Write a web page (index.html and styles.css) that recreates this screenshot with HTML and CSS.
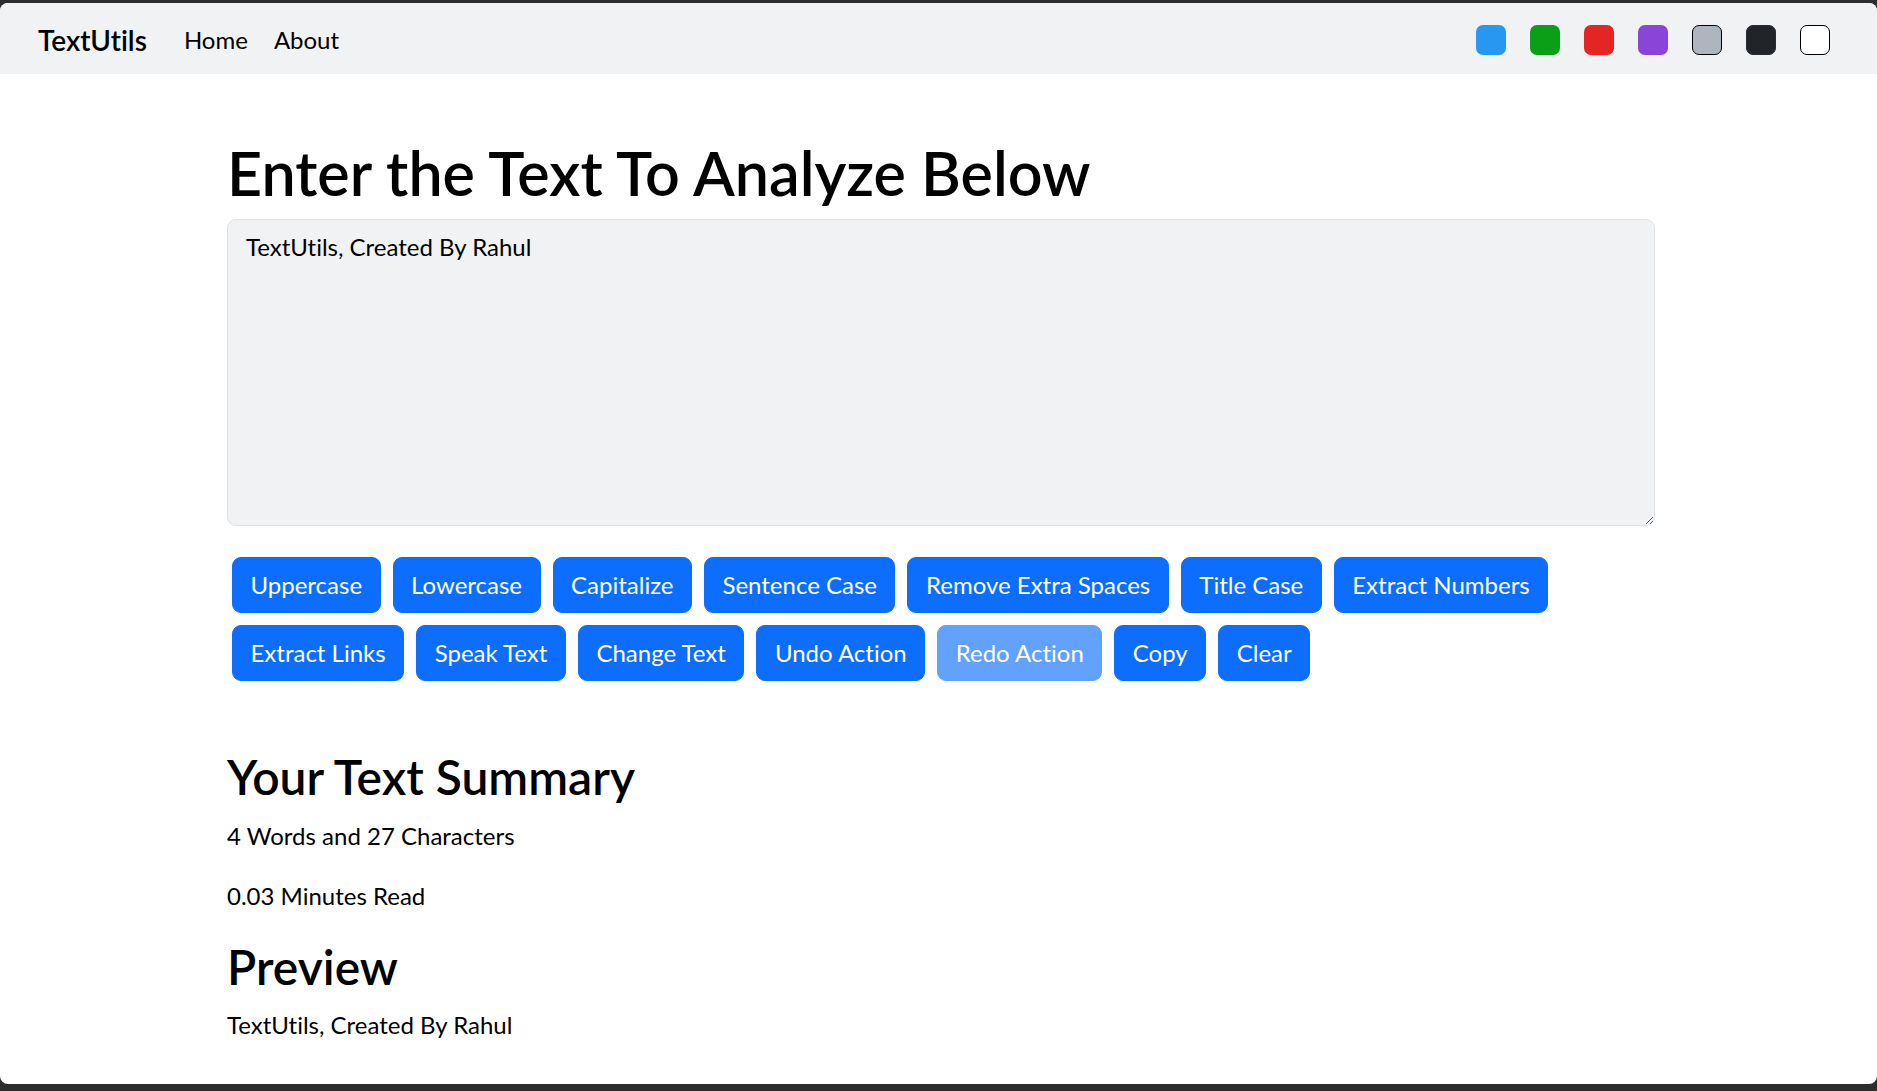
FILE: index.html
```html
<!DOCTYPE html>
<html lang="en">
<head>
<meta charset="utf-8">
<title>TextUtils - Home</title>
<link rel="stylesheet" href="styles.css">
</head>
<body>
<div class="window">
  <nav class="navbar">
    <a class="brand" href="#">TextUtils</a>
    <ul class="nav-links">
      <li><a href="#">Home</a></li>
      <li><a href="#">About</a></li>
    </ul>
    <div class="swatches">
      <span class="swatch swatch-blue"></span>
      <span class="swatch swatch-green"></span>
      <span class="swatch swatch-red"></span>
      <span class="swatch swatch-purple"></span>
      <span class="swatch swatch-gray"></span>
      <span class="swatch swatch-dark"></span>
      <span class="swatch swatch-white"></span>
    </div>
  </nav>
  <main class="container">
    <h1 class="title">Enter the Text To Analyze Below</h1>
    <textarea class="text-input">TextUtils, Created By Rahul</textarea>
    <div class="actions">
      <button class="btn">Uppercase</button>
      <button class="btn">Lowercase</button>
      <button class="btn">Capitalize</button>
      <button class="btn">Sentence Case</button>
      <button class="btn">Remove Extra Spaces</button>
      <button class="btn">Title Case</button>
      <button class="btn">Extract Numbers</button>
      <button class="btn">Extract Links</button>
      <button class="btn">Speak Text</button>
      <button class="btn">Change Text</button>
      <button class="btn">Undo Action</button>
      <button class="btn btn-disabled" disabled>Redo Action</button>
      <button class="btn">Copy</button>
      <button class="btn">Clear</button>
    </div>
    <section class="summary">
      <h2 class="section-title">Your Text Summary</h2>
      <p class="stat">4 Words and 27 Characters</p>
      <p class="stat">0.03 Minutes Read</p>
      <h2 class="section-title">Preview</h2>
      <p class="stat">TextUtils, Created By Rahul</p>
    </section>
  </main>
</div>
</body>
</html>
```

FILE: styles.css
```css
* { box-sizing: border-box; }

html, body {
  margin: 0;
  padding: 0;
  height: 100%;
}

body {
  background: #2d2d2d;
  font-family: Lato, "Open Sans", sans-serif;
  font-variant-ligatures: none;
  color: #000;
  overflow: hidden;
}

.window {
  margin-top: 3px;
  height: 1081px;
  background: #fff;
  border-radius: 8px;
  overflow: hidden;
}

.navbar {
  height: 71px;
  background: #f1f2f4;
  display: flex;
  align-items: center;
  padding: 2px 47px 0 38px;
}

.brand {
  font-size: 28px;
  font-weight: 600;
  color: #000;
  text-decoration: none;
  margin-right: 24px;
}

.nav-links {
  display: flex;
  list-style: none;
  margin: 0;
  padding: 0;
}

.nav-links a {
  display: block;
  padding: 0 13px;
  font-size: 24px;
  line-height: 36px;
  color: #000;
  text-decoration: none;
}

.swatches {
  margin-left: auto;
  display: flex;
  gap: 24px;
}

.swatch {
  width: 30px;
  height: 30px;
  border-radius: 7px;
}

.swatch-blue { background: #2897f1; }
.swatch-green { background: #0a9f17; }
.swatch-red { background: #e52424; }
.swatch-purple { background: #8845d8; }
.swatch-gray { background: #adb5bd; border: 1.5px solid #000; }
.swatch-dark { background: #212529; border: 1px solid #2a2d31; }
.swatch-white { background: #fff; border: 1.5px solid #000; }

.container {
  width: 1428px;
  margin-left: 227px;
  padding-top: 62px;
}

.title {
  font-size: 61px;
  font-weight: 600;
  line-height: 1.2;
  margin: 0 0 10px;
}

.text-input {
  display: block;
  width: 100%;
  height: 307px;
  padding: 9px 18px;
  font-family: inherit;
  font-variant-ligatures: none;
  font-size: 24px;
  line-height: 36px;
  color: #000;
  background: #f1f2f4;
  border: 1px solid #dee2e6;
  border-radius: 9px;
  margin: 0 0 25px;
  resize: vertical;
}

.actions {
  display: flex;
  flex-wrap: wrap;
  gap: 12px;
  padding: 6px 5px;
}

.btn {
  font-family: inherit;
  font-variant-ligatures: none;
  font-size: 24px;
  line-height: 36px;
  padding: 9px 17.5px;
  border: 1px solid #0d6efd;
  border-radius: 9px;
  background: #0d6efd;
  color: #fff;
  cursor: pointer;
}

.btn-disabled {
  background: #62a1fe;
  border-color: #62a1fe;
  cursor: default;
}

.summary {
  margin-top: 61px;
}

.section-title {
  font-size: 48px;
  font-weight: 600;
  line-height: 1.2;
  margin: 0 0 12px;
}

.stat {
  font-size: 24px;
  line-height: 36px;
  margin: 0 0 24px;
}
```
